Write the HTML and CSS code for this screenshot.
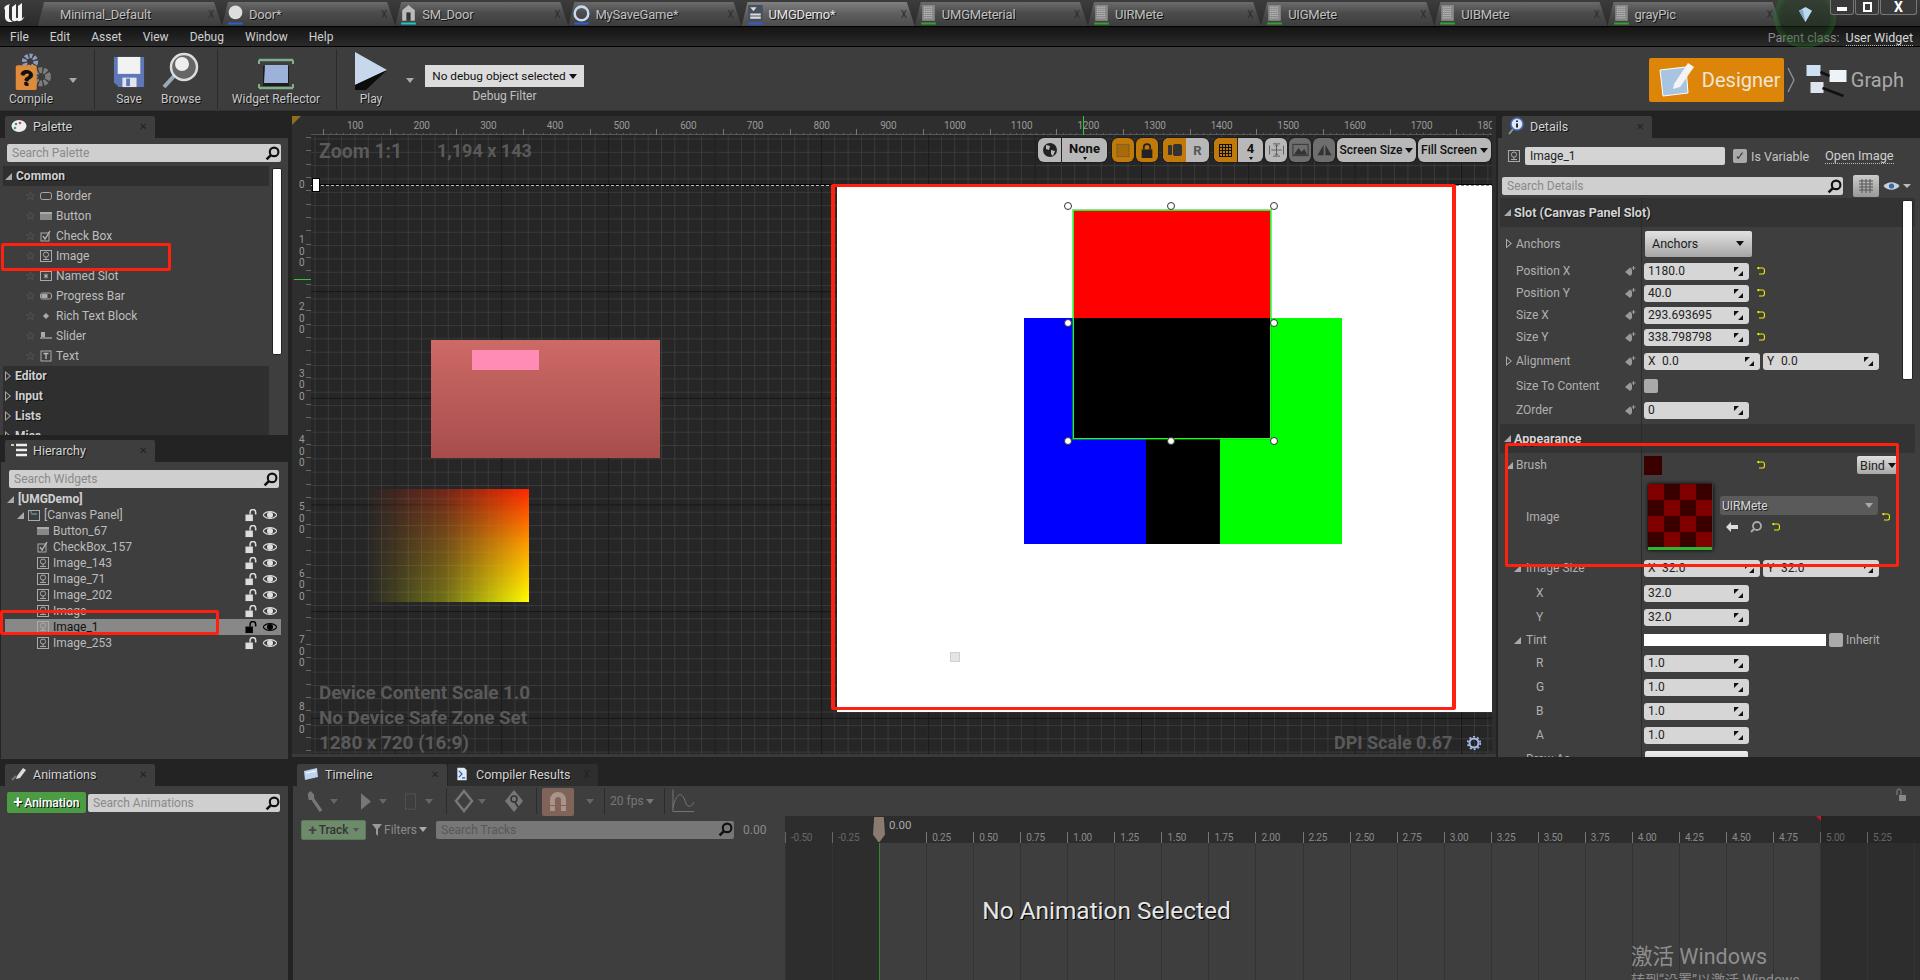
FILE: index.html
```html
<!DOCTYPE html>
<html lang="en">
<head>
    <meta charset="UTF-8">
    <title>UMGDemo</title>
    <link rel="stylesheet" href="styles.css">
</head>
<body>
    <!-- shared icons -->
    <svg class="sprites" width="0" height="0">
        <symbol id="i-search" viewBox="0 0 14 14"><circle cx="8.5" cy="5.5" r="4" fill="none" stroke="#111" stroke-width="2"/><path d="M5.5 8.5L1.5 12.5" stroke="#111" stroke-width="2.4"/></symbol>
        <symbol id="i-lock" viewBox="0 0 13 14"><rect x="0" y="6" width="8" height="7" fill="currentColor"/><path d="M5 6V3.5a3 3 0 0 1 6 0V6" fill="none" stroke="currentColor" stroke-width="1.6"/></symbol>
        <symbol id="i-eye" viewBox="0 0 14 10"><path d="M0 5C3 0.5 11 0.5 14 5C11 9.5 3 9.5 0 5Z" fill="none" stroke="currentColor" stroke-width="1.2"/><circle cx="7" cy="5" r="3" fill="currentColor"/></symbol>
        <symbol id="i-img" viewBox="0 0 12 12"><rect x="0.5" y="0.5" width="11" height="11" fill="none" stroke="#aaa"/><circle cx="6" cy="4.6" r="2.6" fill="none" stroke="#aaa"/><path d="M6 7v2.5M3 9.5h6" stroke="#aaa"/></symbol>
        <symbol id="i-spin" viewBox="0 0 9 9"><path d="M0 0H5L0 5Z M9 9H4L9 4Z" fill="#111"/></symbol>
        <symbol id="i-reset" viewBox="0 0 8 8"><path d="M1 1H6Q7.500 1 7.500 4T6 7H2M2 0L0.500 1L2 2" fill="none" stroke="#ee0" stroke-width="1.1"/></symbol>
        <symbol id="i-pin" viewBox="0 0 11 11"><path d="M0 6L5 1.500L7 3.500V8L5 10Z" fill="#999"/><path d="M8.500 0V4M6.500 2H10.500" stroke="#999"/></symbol>
        <symbol id="i-doc" viewBox="0 0 16 20"><rect x="2" y="1" width="12" height="15" fill="#8a8a8a"/><path d="M4 3h8M4 5h8M4 7h8M4 9h8M4 11h8M4 13h8" stroke="#d0d0d0" stroke-dasharray="1 1"/><path d="M1 18.500H15" stroke="#2fa52f" stroke-width="2"/></symbol>
    </svg>

    <header class="tabbar">
        <svg class="ue-logo" viewBox="0 0 24 20"><path d="M9 1C5 2 2 4 4 7V14C4 18 8 20 12 18.500C9.500 18 8 16 8 14V5C8 3 8 2 9 1Z" fill="#f4f4f4"/><path d="M11 4L15 1V14C15 15.500 16.500 15.500 17 14.500V3L21 0V15.500C22 15 23 14 23.500 13C22.500 17 19 19.500 16 17.500C14 19 12 18 11 17Z" fill="#f4f4f4"/></svg>
        <div class="doc-tab doc-tab-first"><span class="doc-name">Minimal_Default</span><span class="doc-x">X</span></div>
        <div class="doc-tab">
            <svg class="doc-icon" viewBox="0 0 16 20"><circle cx="8" cy="8" r="6.500" fill="#ddd"/><path d="M1 18.500H15" stroke="#2a5fd0" stroke-width="2"/></svg>
            <span class="doc-name">Door*</span><span class="doc-x">X</span>
        </div>
        <div class="doc-tab">
            <svg class="doc-icon" viewBox="0 0 16 20"><path d="M8 1L14 6V16H2V6Z" fill="#bbb"/><rect x="6" y="8" width="4" height="8" fill="#333"/><path d="M1 18.500H15" stroke="#19c8c8" stroke-width="2"/></svg>
            <span class="doc-name">SM_Door</span><span class="doc-x">X</span>
        </div>
        <div class="doc-tab">
            <svg class="doc-icon" viewBox="0 0 16 20"><circle cx="8" cy="9" r="6.500" fill="none" stroke="#c8d8f0" stroke-width="2.400"/><path d="M1 18.500H15" stroke="#2a5fd0" stroke-width="2"/></svg>
            <span class="doc-name">MySaveGame*</span><span class="doc-x">X</span>
        </div>
        <div class="doc-tab doc-tab-on">
            <svg class="doc-icon" viewBox="0 0 16 20"><rect x="1" y="1" width="14" height="15" fill="#46505e"/><path d="M3 3L6 7L9 3" fill="#ddd"/><path d="M3 10H13M3 13H13" stroke="#ddd" stroke-width="2"/><path d="M1 18.500H15" stroke="#2a5fd0" stroke-width="2"/></svg>
            <span class="doc-name">UMGDemo*</span><span class="doc-x">X</span>
        </div>
        <div class="doc-tab"><svg class="doc-icon"><use href="#i-doc"/></svg><span class="doc-name">UMGMeterial</span><span class="doc-x">X</span></div>
        <div class="doc-tab"><svg class="doc-icon"><use href="#i-doc"/></svg><span class="doc-name">UIRMete</span><span class="doc-x">X</span></div>
        <div class="doc-tab"><svg class="doc-icon"><use href="#i-doc"/></svg><span class="doc-name">UIGMete</span><span class="doc-x">X</span></div>
        <div class="doc-tab"><svg class="doc-icon"><use href="#i-doc"/></svg><span class="doc-name">UIBMete</span><span class="doc-x">X</span></div>
        <div class="doc-tab"><svg class="doc-icon"><use href="#i-doc"/></svg><span class="doc-name">grayPic</span><span class="doc-x">X</span></div>
        <div class="glow"></div>
        <svg class="gem" viewBox="0 0 16 18"><path d="M1 5L8 1L15 5L8 17Z" fill="#bcd8ee"/><path d="M5 4L8 17L1 5Z" fill="#7fa8c8"/></svg>
        <div class="win-btns">
            <span class="win-btn win-min"><i></i></span>
            <span class="win-btn win-max"><i></i></span>
            <span class="win-btn win-close">X</span>
        </div>
    </header>

    <nav class="menubar">
        <span>File</span><span>Edit</span><span>Asset</span><span>View</span><span>Debug</span><span>Window</span><span>Help</span>
        <div class="parent-class">Parent class: <a>User Widget</a></div>
    </nav>

    <section class="toolbar">
        <div class="tool tool-compile">
            <svg class="tool-icon" viewBox="0 0 46 42"><circle cx="22" cy="10" r="6" fill="none" stroke="#8e9cc0" stroke-width="5" stroke-dasharray="3 1.500"/><circle cx="34" cy="26" r="7" fill="none" stroke="#7d7d7d" stroke-width="6" stroke-dasharray="3.500 1.500"/><rect x="7" y="14" width="22" height="26" rx="2" fill="#e08a3c"/><text x="18" y="35" class="compile-q">?</text></svg>
            <span>Compile</span>
        </div>
        <i class="drop drop-compile"></i>
        <i class="tool-sep sep-a"></i>
        <div class="tool tool-save">
            <svg class="tool-icon" viewBox="0 0 34 36"><path d="M1 2H33V34H6L1 29Z" fill="#5f77b8"/><rect x="5" y="2" width="24" height="18" fill="#f2f2f2"/><rect x="10" y="24" width="15" height="10" fill="#dfe4ee"/><rect x="14" y="25" width="4" height="8" fill="#5f77b8"/></svg>
            <span>Save</span>
        </div>
        <div class="tool tool-browse">
            <svg class="tool-icon" viewBox="0 0 38 38"><path d="M13 23L2 35" stroke="#9ab" stroke-width="4"/><circle cx="22" cy="15" r="13" fill="#666" stroke="#ddd" stroke-width="2.500"/><circle cx="20" cy="12" r="7" fill="#eee"/></svg>
            <span>Browse</span>
        </div>
        <i class="tool-sep sep-b"></i>
        <div class="tool tool-reflector">
            <svg class="tool-icon" viewBox="0 0 40 34"><path d="M3 3H37M3 31H37" stroke="#7fb08a" stroke-width="2.500"/><path d="M3 3V7M37 3V7M3 31V27M37 31V27" stroke="#7fb08a" stroke-width="2"/><path d="M7 9H33V29H7Z" fill="#1c1c1c"/><path d="M9 8H32V26H8Z" fill="#9db2d8"/></svg>
            <span>Widget Reflector</span>
        </div>
        <i class="tool-sep sep-c"></i>
        <div class="tool tool-play">
            <svg class="tool-icon" viewBox="0 0 34 40"><path d="M1 0L33 18L1 33Z" fill="#c8d8ec"/><path d="M1 33L33 18L12 38L1 38Z" fill="#0c0c0c"/></svg>
            <span>Play</span>
        </div>
        <i class="drop drop-play"></i>
        <div class="debug-col">
            <div class="debug-select">No debug object selected<i class="caret"></i></div>
            <span>Debug Filter</span>
        </div>
        <div class="mode-switch">
            <div class="mode-designer">
                <svg viewBox="0 0 42 40"><path d="M4 10L30 7L32 33L7 36Z" fill="#a8c4e0" stroke="#fff"/><path d="M18 24L32 3L38 7L24 27L17 29Z" fill="#f3f3f3"/></svg>
                <span>Designer</span>
            </div>
            <svg class="mode-chevron" viewBox="0 0 8 26"><path d="M1 1L7 13L1 25" fill="none" stroke="#999" stroke-width="1.200"/></svg>
            <svg class="mode-graph" viewBox="0 0 42 36"><rect x="1" y="3" width="14" height="11" fill="#cfe0f2"/><rect x="24" y="8" width="17" height="12" fill="#eef3f8"/><rect x="5" y="20" width="13" height="11" fill="#dde6ef"/><path d="M15 10L24 14M17 26L38 34" stroke="#111" stroke-width="2.500"/></svg>
            <span class="mode-label">Graph</span>
        </div>
    </section>

    <main class="workspace">
        <div class="left-col">
            <div class="dock dock-palette">
                <div class="dock-tab">
                    <svg class="tab-icon" viewBox="0 0 16 14"><ellipse cx="8" cy="7" rx="7.500" ry="6" fill="#eee"/><circle cx="5" cy="5" r="1.300" fill="#48c"/><circle cx="9" cy="4" r="1.300" fill="#c44"/><circle cx="4" cy="9" r="1.300" fill="#4a4"/></svg>
                    <span>Palette</span><b>&#10005;</b>
                </div>
                <div class="dock-body palette-body">
                    <div class="search search-palette"><span>Search Palette</span><svg><use href="#i-search"/></svg></div>
                    <div class="cat-row"><i class="tri-open"></i>Common</div>
                    <div class="item"><i class="star">&#9734;</i><svg class="item-icon" viewBox="0 0 12 12"><rect x="0.500" y="2.500" width="11" height="7" rx="2" fill="none" stroke="#aaa"/></svg>Border</div>
                    <div class="item"><i class="star">&#9734;</i><svg class="item-icon" viewBox="0 0 12 12"><rect x="0" y="2" width="12" height="8" fill="#888"/><rect x="0" y="2" width="12" height="2" fill="#aaa"/></svg>Button</div>
                    <div class="item"><i class="star">&#9734;</i><svg class="item-icon" viewBox="0 0 12 12"><rect x="1" y="3" width="8" height="8" fill="none" stroke="#aaa"/><path d="M3 6L5 9L10 1" fill="none" stroke="#bbb" stroke-width="1.300"/></svg>Check Box</div>
                    <div class="item"><i class="star">&#9734;</i><svg class="item-icon"><use href="#i-img"/></svg>Image</div>
                    <div class="item"><i class="star">&#9734;</i><svg class="item-icon" viewBox="0 0 12 12"><rect x="0.500" y="1.500" width="11" height="9" fill="none" stroke="#aaa"/><path d="M6 3.500V8.500M3.800 4.500L8.200 7.500M8.200 4.500L3.800 7.500" stroke="#bbb"/></svg>Named Slot</div>
                    <div class="item"><i class="star">&#9734;</i><svg class="item-icon" viewBox="0 0 12 12"><rect x="0.500" y="3" width="11" height="6" rx="2" fill="none" stroke="#aaa"/><rect x="1.500" y="4" width="6" height="4" fill="#aaa"/></svg>Progress Bar</div>
                    <div class="item"><i class="star">&#9734;</i><svg class="item-icon" viewBox="0 0 12 12"><path d="M6 3L9 6L6 9L3 6Z" fill="#aaa"/></svg>Rich Text Block</div>
                    <div class="item"><i class="star">&#9734;</i><svg class="item-icon" viewBox="0 0 12 12"><rect x="1" y="2" width="4" height="5" fill="#aaa"/><path d="M0 8H12" stroke="#aaa" stroke-width="1.300"/></svg>Slider</div>
                    <div class="item"><i class="star">&#9734;</i><svg class="item-icon" viewBox="0 0 12 12"><rect x="1" y="1" width="10" height="10" fill="none" stroke="#aaa"/><path d="M3.500 3.500H8.500M6 3.500V9" stroke="#bbb" stroke-width="1.300"/></svg>Text</div>
                    <div class="cat-row"><i class="tri-closed"></i>Editor</div>
                    <div class="cat-row"><i class="tri-closed"></i>Input</div>
                    <div class="cat-row"><i class="tri-closed"></i>Lists</div>
                    <div class="cat-row"><i class="tri-closed"></i>Misc</div>
                    <div class="palette-thumb"></div>
                    <div class="mark mark-palette"></div>
                </div>
            </div>
            <div class="dock dock-hier">
                <div class="dock-tab">
                    <svg class="tab-icon" viewBox="0 0 16 14"><path d="M5 2H16M5 7H16M5 12H16" stroke="#eee" stroke-width="2.400"/><path d="M0 2H3" stroke="#eee" stroke-width="1.600"/></svg>
                    <span>Hierarchy</span><b>&#10005;</b>
                </div>
                <div class="dock-body hier-body">
                    <div class="search search-hier"><span>Search Widgets</span><svg><use href="#i-search"/></svg></div>
                    <div class="tree">
                        <div class="node node-root"><i class="tri-open"></i>[UMGDemo]</div>
                        <div class="node node-l1"><i class="tri-open"></i><svg class="node-icon" viewBox="0 0 12 12"><rect x="0.500" y="1.500" width="11" height="10" fill="none" stroke="#aaa"/><path d="M3 5H9M3 1V4" stroke="#7ac"/></svg><span>[Canvas Panel]</span><svg class="ico-lock"><use href="#i-lock"/></svg><svg class="ico-eye"><use href="#i-eye"/></svg></div>
                        <div class="node node-l2"><svg class="node-icon" viewBox="0 0 12 12"><rect x="0" y="2" width="12" height="8" fill="#888"/><rect x="0" y="2" width="12" height="2" fill="#aaa"/></svg><span>Button_67</span><svg class="ico-lock"><use href="#i-lock"/></svg><svg class="ico-eye"><use href="#i-eye"/></svg></div>
                        <div class="node node-l2"><svg class="node-icon" viewBox="0 0 12 12"><rect x="1" y="3" width="8" height="8" fill="none" stroke="#aaa"/><path d="M3 6L5 9L10 1" fill="none" stroke="#bbb" stroke-width="1.300"/></svg><span>CheckBox_157</span><svg class="ico-lock"><use href="#i-lock"/></svg><svg class="ico-eye"><use href="#i-eye"/></svg></div>
                        <div class="node node-l2"><svg class="node-icon"><use href="#i-img"/></svg><span>Image_143</span><svg class="ico-lock"><use href="#i-lock"/></svg><svg class="ico-eye"><use href="#i-eye"/></svg></div>
                        <div class="node node-l2"><svg class="node-icon"><use href="#i-img"/></svg><span>Image_71</span><svg class="ico-lock"><use href="#i-lock"/></svg><svg class="ico-eye"><use href="#i-eye"/></svg></div>
                        <div class="node node-l2"><svg class="node-icon"><use href="#i-img"/></svg><span>Image_202</span><svg class="ico-lock"><use href="#i-lock"/></svg><svg class="ico-eye"><use href="#i-eye"/></svg></div>
                        <div class="node node-l2"><svg class="node-icon"><use href="#i-img"/></svg><span>Image</span><svg class="ico-lock"><use href="#i-lock"/></svg><svg class="ico-eye"><use href="#i-eye"/></svg></div>
                        <div class="node node-l2 node-on"><svg class="node-icon"><use href="#i-img"/></svg><span>Image_1</span><svg class="ico-lock"><use href="#i-lock"/></svg><svg class="ico-eye"><use href="#i-eye"/></svg></div>
                        <div class="node node-l2"><svg class="node-icon"><use href="#i-img"/></svg><span>Image_253</span><svg class="ico-lock"><use href="#i-lock"/></svg><svg class="ico-eye"><use href="#i-eye"/></svg></div>
                    </div>
                    <div class="mark mark-hier"></div>
                </div>
            </div>
        </div>

        <div class="designer">
            <i class="corner"></i>
            <div class="ruler-top">
                <span>100</span><span>200</span><span>300</span><span>400</span><span>500</span><span>600</span><span>700</span><span>800</span><span>900</span><span>1000</span><span>1100</span><span>1200</span><span>1300</span><span>1400</span><span>1500</span><span>1600</span><span>1700</span><span>1800</span>
            </div>
            <i class="ruler-mark-top"></i>
            <div class="designer-main">
                <div class="ruler-left">
                    <span>0</span><span>100</span><span>200</span><span>300</span><span>400</span><span>500</span><span>600</span><span>700</span><span>800</span>
                </div>
                <i class="ruler-mark-left"></i>
                <div class="surface">
                    <div class="origin-line"></div>
                    <div class="origin-handle"></div>

                    <div class="w-pink"><div class="w-pink-inner"></div></div>
                    <div class="w-fade"></div>

                    <div class="w-page"></div>
                    <div class="page-dash"></div>
                    <div class="w-blue"></div>
                    <div class="w-black-low"></div>
                    <div class="w-green"></div>
                    <div class="w-red"></div>
                    <div class="w-black"></div>
                    <div class="w-select"></div>
                    <i class="hd hd-1"></i><i class="hd hd-2"></i><i class="hd hd-3"></i>
                    <i class="hd hd-4"></i><i class="hd hd-5"></i>
                    <i class="hd hd-6"></i><i class="hd hd-7"></i><i class="hd hd-8"></i>
                    <div class="w-check"></div>
                    <div class="mark mark-canvas"></div>

                    <div class="info info-zoom">Zoom 1:1</div>
                    <div class="info info-size">1,194 x 143</div>
                    <div class="info info-device">
                        <div>Device Content Scale 1.0</div>
                        <div>No Device Safe Zone Set</div>
                        <div>1280 x 720 (16:9)</div>
                    </div>
                    <div class="info info-dpi">DPI Scale 0.67</div>
                    <svg class="dpi-gear" viewBox="0 0 14 18"><circle cx="7" cy="9" r="4.500" fill="none" stroke="#a8bce8" stroke-width="2"/><circle cx="7" cy="9" r="6.300" fill="none" stroke="#a8bce8" stroke-width="1.600" stroke-dasharray="2 2"/></svg>

                    <div class="canvas-tools">
                        <div class="ct-group ct-world">
                            <span class="ct-cell ct-globe"><svg viewBox="0 0 16 16"><circle cx="8" cy="8" r="7" fill="#222"/><path d="M4 3L8 4L7 8L4 7ZM9 8L13 9L11 14L9 12Z" fill="#bbb"/></svg></span>
                            <span class="ct-cell ct-none">None<i class="caret-sm"></i></span>
                        </div>
                        <div class="ct-group ct-orange ct-one"><svg viewBox="0 0 16 16"><rect x="1" y="1" width="14" height="14" fill="#a96a08" stroke="#555" stroke-dasharray="2 1"/></svg></div>
                        <div class="ct-group ct-orange ct-one"><svg viewBox="0 0 12 14"><rect x="1" y="6" width="10" height="8" fill="#222"/><path d="M3 6V4a3 3 0 0 1 6 0V6" fill="none" stroke="#222" stroke-width="1.600"/></svg></div>
                        <div class="ct-group ct-rr">
                            <span class="ct-cell ct-rr-a"><svg viewBox="0 0 14 14"><rect x="0" y="2" width="4" height="10" rx="1" fill="#333"/><rect x="5" y="1" width="9" height="12" rx="2" fill="#333"/></svg></span>
                            <span class="ct-cell ct-rr-b">R</span>
                        </div>
                        <div class="ct-group ct-grid">
                            <span class="ct-cell ct-grid-a"><svg viewBox="0 0 13 13"><path d="M0 .500H13M0 3.500H13M0 6.500H13M0 9.500H13M0 12.500H13M.500 0V13M3.500 0V13M6.500 0V13M9.500 0V13M12.500 0V13" stroke="#111"/></svg></span>
                            <span class="ct-cell ct-grid-b">4<i class="caret-sm"></i></span>
                        </div>
                        <div class="ct-btn ct-fit"><svg viewBox="0 0 18 16"><path d="M9 2V14M3 8H15M1 3V13M17 3V13M5 1H13M5 15H13M7 4L9 2L11 4M7 12L9 14L11 12" fill="none" stroke="#555"/></svg></div>
                        <div class="ct-btn ct-dim"><svg viewBox="0 0 18 14"><rect x="1" y="1" width="16" height="12" fill="none" stroke="#333"/><path d="M2 12L7 5L10 9L13 6L16 12Z" fill="#333"/></svg></div>
                        <div class="ct-btn ct-dim"><svg viewBox="0 0 18 16"><path d="M8 2L1 14H8ZM10 2V14H17Z" fill="#333"/></svg></div>
                        <div class="ct-btn ct-screen">Screen Size<i class="caret"></i></div>
                        <div class="ct-btn ct-fill">Fill Screen<i class="caret"></i></div>
                    </div>
                </div>
            </div>
        </div>

        <aside class="details">
            <div class="dock-tab">
                <svg class="tab-icon tab-icon-info" viewBox="0 0 16 18"><path d="M5 12L1 17" stroke="#89a" stroke-width="2"/><circle cx="9" cy="7" r="6" fill="#dfe8f5" stroke="#4a70c0" stroke-width="1.500"/><path d="M9 3.500V5M9 6.500V10.500" stroke="#223" stroke-width="2"/></svg>
                <span>Details</span><b>&#10005;</b>
            </div>
            <div class="dock-body details-body">
                <div class="name-line">
                    <svg class="name-icon"><use href="#i-img"/></svg>
                    <div class="name-input">Image_1</div>
                    <span class="check check-on">&#10003;</span>
                    <span class="is-var">Is Variable</span>
                    <a class="open-image">Open Image</a>
                </div>
                <div class="search-line">
                    <div class="search search-details"><span>Search Details</span><svg><use href="#i-search"/></svg></div>
                    <div class="matrix-btn"><svg viewBox="0 0 14 14"><path d="M0 2H14M0 5H14M0 8H14M0 11H14M3 0V14M7 0V14M11 0V14" stroke="#555"/></svg></div>
                    <svg class="view-eye" viewBox="0 0 16 10"><path d="M0 5C4 0 12 0 16 5C12 10 4 10 0 5Z" fill="#c8d0dc"/><circle cx="8" cy="5" r="2.600" fill="#3a68a8"/></svg>
                    <i class="view-caret"></i>
                </div>

                <div class="prop-list">
                    <div class="sect sect-slot"><i class="tri-open"></i>Slot (Canvas Panel Slot)</div>
                    <div class="row row-anchors"><i class="tri-closed tri-row"></i><span class="name">Anchors</span><span class="pin-gap"></span><div class="anchors-btn">Anchors<i class="caret"></i></div></div>
                    <div class="row"><span class="name">Position X</span><svg class="pin"><use href="#i-pin"/></svg><div class="num">1180.0<svg><use href="#i-spin"/></svg></div><svg class="reset"><use href="#i-reset"/></svg></div>
                    <div class="row"><span class="name">Position Y</span><svg class="pin"><use href="#i-pin"/></svg><div class="num">40.0<svg><use href="#i-spin"/></svg></div><svg class="reset"><use href="#i-reset"/></svg></div>
                    <div class="row"><span class="name">Size X</span><svg class="pin"><use href="#i-pin"/></svg><div class="num">293.693695<svg><use href="#i-spin"/></svg></div><svg class="reset"><use href="#i-reset"/></svg></div>
                    <div class="row"><span class="name">Size Y</span><svg class="pin"><use href="#i-pin"/></svg><div class="num">338.798798<svg><use href="#i-spin"/></svg></div><svg class="reset"><use href="#i-reset"/></svg></div>
                    <div class="row row-24 row-gap"><i class="tri-closed tri-row"></i><span class="name">Alignment</span><svg class="pin"><use href="#i-pin"/></svg><div class="num num-wide"><em>X</em>0.0<svg><use href="#i-spin"/></svg></div><div class="num num-wide num-next"><em>Y</em>0.0<svg><use href="#i-spin"/></svg></div></div>
                    <div class="row row-24 row-gap"><span class="name">Size To Content</span><svg class="pin"><use href="#i-pin"/></svg><span class="check"></span></div>
                    <div class="row row-24"><span class="name">ZOrder</span><svg class="pin"><use href="#i-pin"/></svg><div class="num">0<svg><use href="#i-spin"/></svg></div></div>

                    <div class="sect sect-app"><i class="tri-open"></i>Appearance</div>
                    <div class="row row-24 row-brush"><i class="tri-open tri-row"></i><span class="name">Brush</span><span class="pin-gap"></span><span class="swatch"></span><svg class="reset reset-brush"><use href="#i-reset"/></svg><div class="bind-btn">Bind<i class="caret"></i></div></div>
                    <div class="row row-image">
                        <span class="name name-l1">Image</span><span class="pin-gap"></span>
                        <div class="thumb">
                            <i></i><i></i><i></i><i></i><i></i><i></i><i></i><i></i>
                            <i></i><i></i><i></i><i></i><i></i><i></i><i></i><i></i>
                            <b></b>
                        </div>
                        <div class="asset-col">
                            <div class="asset-select">UIRMete<i class="caret-grey"></i></div>
                            <div class="asset-tools">
                                <svg viewBox="0 0 12 11"><path d="M0 5.500L5 0.500V3.500H12V7.500H5V10.500Z" fill="#ddd"/></svg>
                                <svg viewBox="0 0 12 12"><circle cx="7" cy="5" r="4" fill="none" stroke="#aaa" stroke-width="1.800"/><path d="M4 8L1 11" stroke="#aaa" stroke-width="2"/></svg>
                                <svg class="reset"><use href="#i-reset"/></svg>
                            </div>
                        </div>
                        <svg class="reset reset-asset"><use href="#i-reset"/></svg>
                    </div>
                    <div class="row row-24"><i class="tri-open tri-row-l1"></i><span class="name name-l1">Image Size</span><span class="pin-gap"></span><div class="num num-wide"><em>X</em>32.0<svg><use href="#i-spin"/></svg></div><div class="num num-wide num-next"><em>Y</em>32.0<svg><use href="#i-spin"/></svg></div></div>
                    <div class="row row-24 row-gap"><span class="name name-l2">X</span><span class="pin-gap"></span><div class="num">32.0<svg><use href="#i-spin"/></svg></div></div>
                    <div class="row row-24"><span class="name name-l2">Y</span><span class="pin-gap"></span><div class="num">32.0<svg><use href="#i-spin"/></svg></div></div>
                    <div class="row row-tint"><i class="tri-open tri-row-l1"></i><span class="name name-l1">Tint</span><span class="pin-gap"></span><span class="tint-bar"></span><span class="check check-tint"></span><span class="inherit">Inherit</span></div>
                    <div class="row row-24"><span class="name name-l2">R</span><span class="pin-gap"></span><div class="num">1.0<svg><use href="#i-spin"/></svg></div></div>
                    <div class="row row-24"><span class="name name-l2">G</span><span class="pin-gap"></span><div class="num">1.0<svg><use href="#i-spin"/></svg></div></div>
                    <div class="row row-24"><span class="name name-l2">B</span><span class="pin-gap"></span><div class="num">1.0<svg><use href="#i-spin"/></svg></div></div>
                    <div class="row row-24"><span class="name name-l2">A</span><span class="pin-gap"></span><div class="num">1.0<svg><use href="#i-spin"/></svg></div></div>
                    <div class="row row-24 row-last"><span class="name name-l1">Draw As</span><span class="pin-gap"></span><div class="draw-as"></div></div>
                </div>
                <div class="details-thumb"></div>
                <div class="mark mark-details"></div>
            </div>
        </aside>
    </main>

    <section class="bottom">
        <div class="anim-col">
            <div class="dock-tab">
                <svg class="tab-icon" viewBox="0 0 16 14"><path d="M6 9L12 1L15 3L9 11L5 12Z" fill="#ddd"/><path d="M1 13L5 9" stroke="#777" stroke-width="2"/></svg>
                <span>Animations</span><b>&#10005;</b>
            </div>
            <div class="dock-body anim-body">
                <div class="add-anim"><strong>+</strong>Animation</div>
                <div class="search search-anim"><span>Search Animations</span><svg><use href="#i-search"/></svg></div>
            </div>
        </div>
        <div class="time-col">
            <div class="tab-row">
                <div class="dock-tab">
                    <svg class="tab-icon" viewBox="0 0 16 14"><path d="M1 4L14 1L15 10L2 13Z" fill="#bcd4f0"/><path d="M3 6L13 4" stroke="#fff"/></svg>
                    <span>Timeline</span><b>&#10005;</b>
                </div>
                <div class="dock-tab dock-tab-off">
                    <svg class="tab-icon" viewBox="0 0 14 18"><path d="M1 1H10L13 4V17H1Z" fill="#dfe8f5"/><path d="M3 5L7 9L3 13M7 14H11" fill="none" stroke="#2a5fb0" stroke-width="1.600"/></svg>
                    <span>Compiler Results</span><b>X</b>
                </div>
            </div>
            <div class="time-body">
                <div class="time-tools">
                    <svg class="tt-wrench" viewBox="0 0 18 24"><path d="M3 1L7 5V9L16 22L13 24L4 11H1L0 4Z" fill="#777"/></svg>
                    <i class="tt-drop tt-d1"></i>
                    <svg class="tt-play" viewBox="0 0 12 20"><path d="M0 0L12 10L0 20Z" fill="#777"/></svg>
                    <i class="tt-drop tt-d2"></i>
                    <svg class="tt-dots" viewBox="0 0 14 20"><rect x="1" y="1" width="12" height="18" fill="none" stroke="#777" stroke-dasharray="1 1.500"/></svg>
                    <i class="tt-drop tt-d3"></i>
                    <i class="tt-sep tt-s1"></i>
                    <svg class="tt-diamond" viewBox="0 0 20 24"><path d="M10 2L18 12L10 22L2 12Z" fill="none" stroke="#777" stroke-width="2.500"/></svg>
                    <i class="tt-drop tt-d4"></i>
                    <svg class="tt-diamond2" viewBox="0 0 20 24"><path d="M10 1L19 12L10 23L1 12Z" fill="#777"/><circle cx="10" cy="10" r="3" fill="none" stroke="#333" stroke-width="1.500"/><path d="M11 13L14 18" stroke="#333" stroke-width="1.500"/></svg>
                    <i class="tt-sep tt-s2"></i>
                    <div class="tt-magnet"><svg viewBox="0 0 20 22"><path d="M2 14V9a8 8 0 0 1 16 0V14H13V9a3 3 0 0 0-6 0V14Z" fill="#a89488"/><path d="M2 15H7V20H2ZM13 15H18V20H13Z" fill="#a89488"/></svg></div>
                    <i class="tt-drop tt-d5"></i>
                    <i class="tt-sep tt-s3"></i>
                    <span class="tt-fps">20 fps</span>
                    <i class="tt-drop tt-d6"></i>
                    <i class="tt-sep tt-s4"></i>
                    <svg class="tt-curve" viewBox="0 0 24 26"><path d="M1 1V24H23M1 20C5 2 11 4 14 14C16 20 20 20 23 14" fill="none" stroke="#777"/></svg>
                    <svg class="tt-lock" viewBox="0 0 10 14"><path d="M1 7V3a2 2 0 0 1 4 0V7" fill="none" stroke="#888"/><rect x="3" y="7" width="7" height="6" fill="#888"/></svg>
                </div>
                <div class="time-main">
                    <div class="track-side">
                        <div class="track-row">
                            <div class="add-track"><strong>+</strong>Track<i class="caret-dim"></i></div>
                            <div class="filters"><svg viewBox="0 0 10 12"><path d="M0 0H10L6 5V12L4 10V5Z" fill="#999"/></svg>Filters<i class="caret-grey"></i></div>
                            <div class="search search-track"><span>Search Tracks</span><svg><use href="#i-search"/></svg></div>
                            <span class="track-time">0.00</span>
                        </div>
                    </div>
                    <div class="time-side">
                        <div class="time-ruler">
                            <span class="dim">-0.50</span><span class="dim">-0.25</span><span class="no-tick"></span><span>0.25</span><span>0.50</span><span>0.75</span><span>1.00</span><span>1.25</span><span>1.50</span><span>1.75</span><span>2.00</span><span>2.25</span><span>2.50</span><span>2.75</span><span>3.00</span><span>3.25</span><span>3.50</span><span>3.75</span><span>4.00</span><span>4.25</span><span>4.50</span><span>4.75</span><span class="dim">5.00</span><span class="dim">5.25</span>
                            <div class="head-time">0.00</div>
                            <i class="playhead"></i>
                            <i class="end-mark"></i>
                        </div>
                        <div class="time-tracks"></div>
                    </div>
                </div>
                <div class="no-anim">No Animation Selected</div>
            </div>
        </div>
    </section>

    <div class="watermark">
        <div class="wm-big">激活 Windows</div>
        <div class="wm-small">转到“设置”以激活 Windows。</div>
    </div>
</body>
</html>
```

FILE: styles.css
```css
/* General */
* {
    box-sizing: border-box;
}

html, body {
    margin: 0;
    height: 980px;
    overflow: hidden;
}

body {
    position: relative;
    width: 1920px;
    background-color: #232323;
    color: #c4c4c4;
    font-family: 'Roboto', 'Liberation Sans', sans-serif;
    font-size: 12px;
}

i, em {
    font-style: normal;
}

svg {
    display: block;
    flex: none;
}

.sprites {
    position: absolute;
}

/* Small triangles used all over */
.caret {
    display: inline-block;
    width: 0;
    height: 0;
    margin-left: 3px;
    border-left: 4.5px solid transparent;
    border-right: 4.5px solid transparent;
    border-top: 5px solid #111;
}

.caret-sm {
    position: absolute;
    left: 50%;
    bottom: 2px;
    margin-left: -2px;
    border-left: 2.5px solid transparent;
    border-right: 2.5px solid transparent;
    border-top: 3px solid #111;
}

.caret-grey {
    display: inline-block;
    width: 0;
    height: 0;
    border-left: 4.5px solid transparent;
    border-right: 4.5px solid transparent;
    border-top: 5px solid #aaa;
}

.caret-dim {
    display: inline-block;
    width: 0;
    height: 0;
    margin-left: 4px;
    border-left: 3.5px solid transparent;
    border-right: 3.5px solid transparent;
    border-top: 4px solid #555;
}

.tri-open {
    display: block;
    width: 0;
    height: 0;
    flex: none;
    border-left: 7px solid transparent;
    border-bottom: 7px solid #aaa;
}

.tri-closed {
    display: block;
    width: 6px;
    height: 10px;
    flex: none;
    background: #aaa;
    clip-path: polygon(0 0, 100% 50%, 0 100%, 0 0, 1px 2px, 1px 8px, 4.5px 5px, 1px 2px);
}

/* Document tabs */
.tabbar {
    position: relative;
    display: flex;
    align-items: flex-end;
    height: 27px;
    background: linear-gradient(#3c3c3c, #2a2a2a);
    border-bottom: 1px solid #000;
}

.ue-logo {
    align-self: center;
    width: 24px;
    height: 20px;
    margin: 0 13px 0 1px;
}

.doc-tab {
    display: flex;
    align-items: center;
    flex: none;
    width: 173.2px;
    height: 24px;
    padding: 0 8px 0 5px;
    background: linear-gradient(#6b6b6b, #4c4c4c 45%, #3d3d3d);
    clip-path: polygon(6px 0, calc(100% - 8px) 0, 100% 100%, 0 100%);
    color: #c0c0c0;
    font-size: 13px;
    letter-spacing: -0.2px;
    text-shadow: 1px 1px 0 #111;
}

.doc-tab-first {
    width: 184px;
    padding-left: 22px;
}

.doc-tab-on {
    background: linear-gradient(#808080, #5e5e5e 50%, #4c4c4c);
    color: #e6e6e6;
}

.doc-icon {
    width: 17px;
    height: 21px;
    margin-right: 5px;
}

.doc-name {
    flex: 1;
    white-space: nowrap;
}

.doc-x {
    color: #2d2d2d;
    font-size: 10px;
    text-shadow: none;
}

.glow {
    position: absolute;
    left: 1774px;
    top: -14px;
    width: 62px;
    height: 62px;
    border-radius: 50%;
    background: radial-gradient(circle, rgba(30, 70, 30, 0.3) 55%, rgba(40, 150, 40, 0.55) 85%, transparent 100%);
    z-index: 3;
    pointer-events: none;
}

.gem {
    position: absolute;
    left: 1798px;
    top: 6px;
    width: 15px;
    height: 17px;
    z-index: 4;
}

.win-btns {
    position: absolute;
    right: 3px;
    top: 0;
    display: flex;
    gap: 1px;
    z-index: 4;
}

.win-btn {
    display: flex;
    align-items: center;
    justify-content: center;
    width: 24px;
    height: 15px;
    background: #3a3a3a;
    border: 1px solid #777;
    border-top: none;
    border-radius: 0 0 3px 3px;
    color: #fff;
    font-weight: 700;
    font-size: 14px;
}

.win-close {
    width: 37px;
}

.win-min i {
    width: 10px;
    height: 4px;
    margin-top: 3px;
    background: #fff;
}

.win-max i {
    width: 9px;
    height: 10px;
    border: 2px solid #fff;
}

/* Menu */
.menubar {
    position: relative;
    display: flex;
    align-items: center;
    gap: 21px;
    height: 20px;
    padding-left: 10px;
    background: linear-gradient(#141414, #2a2a2a);
    border-bottom: 1px solid #000;
    color: #cfcfcf;
}

.parent-class {
    position: absolute;
    right: 7px;
    top: 3px;
    color: #888;
    font-size: 12.5px;
}

.parent-class a {
    margin-left: 3px;
    color: #d8d8d8;
    border-bottom: 1px dotted #bbb;
}

/* Main toolbar */
.toolbar {
    display: flex;
    align-items: flex-start;
    height: 64px;
    background-color: #3d3d3d;
    border-bottom: 1px solid #333;
}

.tool {
    display: flex;
    flex-direction: column;
    align-items: center;
    height: 63px;
    padding-top: 5px;
    color: #c8c8c8;
    text-shadow: 1px 1px 0 #111;
}

.tool span {
    margin-top: auto;
    margin-bottom: 4px;
    white-space: nowrap;
}

.tool-compile { width: 62px; }
.tool-compile .tool-icon { width: 44px; height: 40px; }
.compile-q { font: 700 24px 'Liberation Sans', sans-serif; fill: #111; text-anchor: middle; }
.tool-save { width: 50px; margin-left: 9px; }
.tool-save .tool-icon { width: 32px; height: 34px; margin-top: 3px; }
.tool-browse { width: 54px; }
.tool-browse .tool-icon { width: 38px; height: 38px; }
.tool-reflector { width: 100px; margin-left: 8px; }
.tool-reflector .tool-icon { width: 40px; height: 34px; margin-top: 5px; }
.tool-play { width: 52px; margin-left: 8px; }
.tool-play .tool-icon { width: 34px; height: 40px; }

.tool-sep {
    width: 1px;
    height: 60px;
    margin-top: 2px;
    background: #2a2a2a;
}

.sep-a { margin-left: 8px; }
.sep-b { margin-left: 9px; }
.sep-c { margin-left: 10px; }

.drop {
    width: 0;
    height: 0;
    margin-top: 31px;
    border-left: 4px solid transparent;
    border-right: 4px solid transparent;
    border-top: 5px solid #aaa;
}

.drop-compile { margin-left: 7px; margin-right: 9px; }
.drop-play { margin-left: 9px; margin-right: 7px; }

.debug-col {
    display: flex;
    flex-direction: column;
    align-items: center;
    width: 159px;
    margin-left: 4px;
    padding-top: 18px;
    color: #c0c0c0;
}

.debug-select {
    display: flex;
    align-items: center;
    justify-content: center;
    width: 159px;
    height: 22px;
    margin-bottom: 2px;
    background: #dcdcdc;
    color: #111;
    font-size: 11.8px;
}

.mode-switch {
    display: flex;
    align-items: center;
    height: 44px;
    margin: 11px 16px 0 auto;
}

.mode-designer {
    display: flex;
    align-items: center;
    width: 135px;
    height: 44px;
    padding-left: 7px;
    background: #dd8509;
    border-radius: 2px;
    color: #f0e6d8;
    font-size: 20px;
}

.mode-designer svg {
    width: 42px;
    height: 40px;
    margin-right: 4px;
}

.mode-chevron {
    width: 8px;
    height: 26px;
    margin: 0 10px 0 3px;
}

.mode-graph {
    width: 43px;
    height: 36px;
    margin-right: 3px;
}

.mode-label {
    color: #aaa;
    font-size: 20px;
}

/* Docked panels */
.workspace {
    display: flex;
    height: 649px;
    padding-top: 5px;
}

.left-col {
    display: flex;
    flex-direction: column;
    gap: 5px;
    width: 288px;
}

.dock-palette { height: 319px; }
.dock-hier { height: 319px; }

.dock {
    display: flex;
    flex-direction: column;
}

.dock-tab {
    display: flex;
    align-items: center;
    flex: none;
    width: 150px;
    height: 22px;
    margin-left: 5px;
    padding: 0 0 2px 6px;
    background: #3e3e3e;
    border-radius: 2px 2px 0 0;
    color: #d4d4d4;
    font-size: 12.5px;
    text-shadow: 1px 1px 0 #111;
}

.dock-tab span {
    flex: 1;
}

.dock-tab b {
    margin-right: 8px;
    color: #222;
    font-weight: 400;
    font-size: 10px;
    text-shadow: none;
}

.dock-tab-off {
    background: #2e2e2e;
    margin-left: 1px;
}

.tab-icon {
    width: 16px;
    height: 14px;
    margin-right: 6px;
}

.tab-icon-info {
    height: 18px;
}

.dock-body {
    position: relative;
    flex: 1;
    background: #3e3e3e;
}

.search {
    display: flex;
    align-items: center;
    justify-content: space-between;
    height: 18px;
    padding: 0 1px 0 5px;
    background: #cfcfcf;
    border-radius: 2px;
    color: #8a8a8a;
    font-size: 12px;
}

.search svg {
    width: 15px;
    height: 15px;
}

.mark {
    position: absolute;
    border: 3px solid #ff2010;
    border-radius: 2px;
    z-index: 5;
    pointer-events: none;
}

/* Palette */
.palette-body {
    overflow: hidden;
    padding: 6px 6px 0 3px;
}

.search-palette {
    margin: 0 0 4px 4px;
    width: 274px;
}

.cat-row {
    display: flex;
    align-items: center;
    width: 266px;
    height: 20px;
    padding-left: 2px;
    background: #2f2f2f;
    color: #d0d0d0;
    font-weight: 700;
    text-shadow: 1px 1px 0 #111;
}

.cat-row i {
    margin-right: 4px;
}

.item {
    display: flex;
    align-items: center;
    height: 20px;
    padding-left: 22px;
    color: #bdbdbd;
}

.star {
    width: 14px;
    color: #666;
    font-size: 12px;
}

.item-icon {
    width: 12px;
    height: 12px;
    margin: 0 4px 0 1px;
}

.palette-thumb {
    position: absolute;
    left: 272px;
    top: 30px;
    width: 10px;
    height: 187px;
    background: #fff;
    border: 1px solid #222;
    border-radius: 2px;
}

.mark-palette {
    left: 1px;
    top: 105px;
    width: 170px;
    height: 28px;
}

/* Hierarchy */
.dock-hier .dock-body {
    margin-left: 1px;
    padding: 8px 7px 0 4px;
}

.search-hier {
    width: 270px;
    margin-left: 4px;
    margin-bottom: 3px;
}

.node {
    display: flex;
    align-items: center;
    height: 16px;
    color: #bcbcbc;
    font-size: 12px;
}

.node span {
    flex: 1;
}

.node-root {
    padding-left: 2px;
    color: #d0d0d0;
    font-weight: 700;
}

.node-root i {
    margin-right: 4px;
}

.node-l1 {
    padding-left: 12px;
}

.node-l1 i {
    margin-right: 4px;
}

.node-icon {
    width: 12px;
    height: 12px;
    margin-right: 4px;
}

.node-l2 {
    padding-left: 32px;
}

.ico-lock {
    width: 13px;
    height: 13px;
    color: #ddd;
    margin-right: 5px;
}

.ico-eye {
    width: 14px;
    height: 10px;
    color: #ddd;
    margin-right: 4px;
}

.node-on {
    background: #888;
    color: #111;
}

.node-on .ico-lock,
.node-on .ico-eye {
    color: #000;
}

.mark-hier {
    left: -1px;
    top: 148px;
    width: 219px;
    height: 25px;
}

/* Designer */
.designer {
    position: relative;
    display: flex;
    flex-direction: column;
    width: 1204px;
    height: 641px;
    margin-left: 4px;
    background: #2e2e2e;
    overflow: hidden;
    border-bottom: 3px solid #3a3a3a;
}

.corner {
    position: absolute;
    left: 0;
    top: 0;
    border-top: 9px solid #8e6f1c;
    border-right: 9px solid transparent;
}

.ruler-top {
    display: flex;
    flex: none;
    height: 19px;
    margin: 0 4px 0 19px;
    padding-left: 10.7px;
    overflow: hidden;
    color: #999;
    font-size: 10px;
    letter-spacing: -0.2px;
    background:
        repeating-linear-gradient(90deg, #777 0 1px, transparent 1px 66.67px) 11.5px 100% / 100% 6px no-repeat,
        repeating-linear-gradient(90deg, #5e5e5e 0 1px, transparent 1px 6.667px) 11.5px 100% / 100% 2px no-repeat,
        linear-gradient(#555, #555) 0 100% / 100% 1px no-repeat;
}

.ruler-top span {
    flex: none;
    width: 66.67px;
    padding-top: 4px;
    text-align: center;
}

.ruler-mark-top {
    position: absolute;
    left: 791px;
    top: 0;
    width: 1px;
    height: 19px;
    background: #2dcc2d;
}

.ruler-mark-left {
    position: absolute;
    left: 2px;
    top: 163px;
    width: 17px;
    height: 1px;
    background: #2dcc2d;
}

.designer-main {
    display: flex;
    flex: 1;
    min-height: 0;
}

.ruler-left {
    flex: none;
    width: 19px;
    padding-top: 16.7px;
    color: #999;
    font-size: 10px;
    background:
        repeating-linear-gradient(180deg, #666 0 1px, transparent 1px 13.33px) 100% 2px / 5px 100% no-repeat;
}

.ruler-left span {
    display: flex;
    align-items: center;
    height: 66.67px;
    width: 14px;
    padding-left: 7px;
    line-height: 11.5px;
    word-break: break-all;
}

.surface {
    position: relative;
    flex: 1;
    margin-right: 4px;
    overflow: hidden;
    background-color: #262626;
    background-image:
        linear-gradient(90deg, #161616 1px, transparent 1px),
        linear-gradient(#161616 1px, transparent 1px),
        linear-gradient(90deg, #3a3a3a 1px, transparent 1px),
        linear-gradient(#3a3a3a 1px, transparent 1px);
    background-size: 106.67px 106.67px, 106.67px 106.67px, 13.33px 13.33px, 13.33px 13.33px;
    background-position: 83.5px 49.5px, 83.5px 49.5px, 3.5px 3.5px, 3.5px 3.5px;
}

.origin-line {
    position: absolute;
    left: 0;
    right: 0;
    top: 49px;
    height: 3px;
    border-top: 1px solid #000;
    background: repeating-linear-gradient(90deg, #bbb 0 3px, transparent 3px 5px) 0 0 / 100% 1px no-repeat;
}

.origin-handle {
    position: absolute;
    left: 1px;
    top: 43px;
    width: 8px;
    height: 14px;
    background: #fff;
    border: 1px solid #000;
}

/* Widgets on the canvas, placed by their design position */
.w-pink {
    position: absolute;
    left: 120px;
    top: 205px;
    width: 229px;
    height: 118px;
    background: linear-gradient(#cc6a66, #a84c4c);
}

.w-pink-inner {
    position: absolute;
    left: 41px;
    top: 10px;
    width: 67px;
    height: 20px;
    background: #ff8cb4;
}

.w-fade {
    position: absolute;
    left: 50px;
    top: 354px;
    width: 168px;
    height: 113px;
    background: linear-gradient(#ff2800, #ffa000 50%, #ffff00);
    -webkit-mask-image: linear-gradient(90deg, transparent 3%, rgba(0, 0, 0, 0.35) 50%, #000 100%);
    mask-image: linear-gradient(90deg, transparent 3%, rgba(0, 0, 0, 0.35) 50%, #000 100%);
}

.w-page {
    position: absolute;
    left: 526px;
    top: 50px;
    width: 655px;
    height: 527px;
    background: #fff;
}

.page-dash {
    position: absolute;
    left: 1145px;
    right: 0;
    top: 50px;
    height: 1px;
    background: repeating-linear-gradient(90deg, #888 0 3px, transparent 3px 5px);
}

.w-blue {
    position: absolute;
    left: 713px;
    top: 183px;
    width: 122px;
    height: 226px;
    background: #00f;
}

.w-black-low {
    position: absolute;
    left: 835px;
    top: 303px;
    width: 74px;
    height: 106px;
    background: #000;
}

.w-green {
    position: absolute;
    left: 909px;
    top: 183px;
    width: 122px;
    height: 226px;
    background: #0f0;
}

.w-red {
    position: absolute;
    left: 763px;
    top: 76px;
    width: 196px;
    height: 107px;
    background: #f00;
}

.w-black {
    position: absolute;
    left: 763px;
    top: 183px;
    width: 196px;
    height: 120px;
    background: #000;
}

.w-select {
    position: absolute;
    left: 762px;
    top: 75px;
    width: 198px;
    height: 229px;
    border: 1px solid #1bff1b;
    outline: 1px solid rgba(27, 200, 27, 0.5);
}

.hd {
    position: absolute;
    width: 8px;
    height: 8px;
    background: #fff;
    border: 1px solid #333;
    border-radius: 50%;
    margin: -4px 0 0 -4px;
}

.hd-1 { left: 757px; top: 71px; }
.hd-2 { left: 860px; top: 71px; }
.hd-3 { left: 963px; top: 71px; }
.hd-4 { left: 757px; top: 188px; }
.hd-5 { left: 963px; top: 188px; }
.hd-6 { left: 757px; top: 306px; background: #fff; }
.hd-7 { left: 860px; top: 306px; }
.hd-8 { left: 963px; top: 306px; }

.w-check {
    position: absolute;
    left: 639px;
    top: 517px;
    width: 10px;
    height: 10px;
    background: #e4e4e4;
    border: 1px solid #d0d0d0;
}

.mark-canvas {
    left: 520px;
    top: 49px;
    width: 625px;
    height: 526px;
    border-width: 3px 4px;
}

.info {
    position: absolute;
    color: #5a5a5a;
    font-weight: 700;
    font-size: 19px;
    white-space: nowrap;
}

.info-zoom { left: 8px; top: 5px; font-size: 19.5px; }
.info-size { left: 126px; top: 5px; font-size: 18px; }

.info-device {
    left: 8px;
    top: 545px;
    font-size: 19px;
    line-height: 25px;
    letter-spacing: -0.1px;
}

.info-dpi { left: 1023px; top: 597px; font-size: 18px; }

.dpi-gear {
    position: absolute;
    left: 1156px;
    top: 599px;
    width: 14px;
    height: 18px;
}

.canvas-tools {
    position: absolute;
    left: 727px;
    top: 3px;
    display: flex;
    gap: 2px;
    color: #111;
    font-weight: 700;
}

.ct-group, .ct-btn {
    display: flex;
    align-items: center;
    height: 24px;
    border-radius: 6px;
    background: #b8b8b8;
    overflow: hidden;
    box-shadow: 0 0 0 1px #1e1e1e;
}

.ct-cell {
    position: relative;
    display: flex;
    align-items: center;
    justify-content: center;
    height: 100%;
}

.ct-world { width: 69px; margin-right: 3px; }
.ct-globe { width: 24px; border-right: 1px solid #222; }
.ct-globe svg { width: 16px; height: 16px; }
.ct-none { flex: 1; font-size: 13px; padding-bottom: 3px; }

.ct-orange {
    justify-content: center;
    background: #c17908;
}

.ct-one { width: 22px; }
.ct-one svg { width: 14px; height: 15px; }

.ct-rr { width: 46px; margin-left: 3px; margin-right: 3px; }
.ct-rr-a { width: 23px; background: #c17908; }
.ct-rr-a svg { width: 14px; height: 14px; }
.ct-rr-b { flex: 1; color: #555; font-size: 13px; }

.ct-grid { width: 49px; }
.ct-grid-a { width: 24px; background: #c17908; border-right: 1px solid #222; }
.ct-grid-a svg { width: 13px; height: 13px; }
.ct-grid-b { flex: 1; font-size: 13px; padding-bottom: 3px; }

.ct-fit, .ct-dim {
    justify-content: center;
    width: 22px;
}

.ct-fit svg, .ct-dim svg {
    width: 17px;
    height: 14px;
}

.ct-dim {
    background: #6e6e6e;
}

.ct-screen, .ct-fill {
    justify-content: center;
    font-size: 12px;
    font-weight: 500;
    white-space: nowrap;
}

.ct-screen { width: 79px; }
.ct-fill { width: 73px; }

/* Details */
.details {
    display: flex;
    flex-direction: column;
    width: 422px;
    height: 641px;
    margin-left: 2px;
}

.details .dock-tab {
    margin-left: 4px;
}

.details-body {
    overflow: hidden;
}

.name-line {
    display: flex;
    align-items: center;
    height: 18px;
    margin-top: 9px;
    padding-left: 10px;
}

.name-icon {
    width: 12px;
    height: 12px;
    margin-right: 5px;
}

.name-input {
    display: flex;
    align-items: center;
    width: 200px;
    height: 18px;
    padding-left: 5px;
    background: #d4d4d4;
    border-radius: 2px;
    color: #222;
}

.check {
    display: flex;
    align-items: center;
    justify-content: center;
    width: 14px;
    height: 14px;
    background: #aaa;
    border-radius: 2px;
    color: #333;
    font-size: 12px;
}

.name-line .check {
    margin-left: 8px;
}

.is-var {
    margin-left: 4px;
    width: 74px;
    font-size: 12.5px;
}

.open-image {
    color: #cfcfcf;
    border-bottom: 1px dotted #bbb;
    font-size: 12.8px;
}

.search-line {
    display: flex;
    align-items: center;
    height: 22px;
    margin-top: 10px;
    padding-left: 4px;
}

.search-details {
    width: 341px;
}

.matrix-btn {
    display: flex;
    align-items: center;
    justify-content: center;
    width: 26px;
    height: 22px;
    margin-left: 10px;
    background: linear-gradient(#ccc, #999);
    border-radius: 2px;
}

.matrix-btn svg {
    width: 14px;
    height: 14px;
}

.view-eye {
    width: 17px;
    height: 10px;
    margin-left: 4px;
}

.view-caret {
    margin-left: 3px;
    border-left: 4px solid transparent;
    border-right: 4px solid transparent;
    border-top: 4px solid #bbb;
}

.prop-list {
    margin: 1px 5px 0 2px;
    height: 700px;
    background: linear-gradient(#2a2a2a, #2a2a2a) 141px 0 / 1px 100% no-repeat;
    color: #b0b0b0;
}

.sect {
    display: flex;
    align-items: center;
    height: 29px;
    padding-left: 4px;
    background: linear-gradient(#2a2a2a, #2a2a2a) 141px 0 / 1px 100% no-repeat #333;
    border-radius: 2px;
    color: #d4d4d4;
    font-size: 12.6px;
    font-weight: 700;
    text-shadow: 1px 1px 0 #111;
}

.sect i {
    margin-right: 3px;
}

.sect-app {
    margin-top: 2px;
}

.row {
    position: relative;
    display: flex;
    align-items: center;
    height: 22px;
    padding-left: 16px;
}

.row-24 {
    height: 24px;
}

.row-gap {
    margin-top: 1px;
}

.row-anchors {
    height: 33px;
}

.row-image {
    height: 79px;
}

.row-tint {
    height: 22px;
}

.tri-row {
    position: absolute;
    left: 6px;
}

.tri-row-l1 {
    position: absolute;
    left: 14px;
}

.name {
    width: 109px;
    flex: none;
    white-space: nowrap;
    font-size: 12px;
}

.name-l1 {
    margin-left: 10px;
    width: 99px;
}

.name-l2 {
    margin-left: 20px;
    width: 89px;
}

.pin, .pin-gap {
    width: 11px;
    height: 11px;
    margin-right: 8px;
}

.num {
    display: flex;
    align-items: center;
    justify-content: space-between;
    width: 105px;
    height: 17px;
    padding: 0 6px 0 4px;
    background: #d6d6d6;
    border-radius: 3px;
    color: #222;
    font-size: 12px;
}

.num svg {
    width: 9px;
    height: 9px;
}

.num-wide {
    width: 116px;
    justify-content: flex-start;
}

.num-wide em {
    width: 14px;
}

.num-wide svg {
    margin-left: auto;
}

.num-next {
    margin-left: 3px;
}

.reset {
    width: 8px;
    height: 8px;
    margin-left: 8px;
}

.anchors-btn {
    display: flex;
    align-items: center;
    justify-content: space-between;
    width: 107px;
    height: 26px;
    margin-left: 1px;
    padding: 0 8px 0 7px;
    background: linear-gradient(#e2e2e2, #a6a6a6);
    border-radius: 2px;
    color: #1c1c1c;
    font-size: 12.5px;
}

.swatch {
    width: 18px;
    height: 19px;
    background: #3a0000;
}

.reset-brush {
    margin-left: 95px;
}

.bind-btn {
    display: flex;
    align-items: center;
    justify-content: center;
    width: 42px;
    height: 18px;
    margin-left: 92px;
    background: linear-gradient(#e0e0e0, #a8a8a8);
    border-radius: 2px;
    color: #222;
    font-size: 12.5px;
}

.thumb {
    position: relative;
    display: grid;
    grid-template-columns: repeat(4, 16px);
    grid-auto-rows: 16px;
    width: 65px;
    height: 66px;
    margin-left: 4px;
    box-shadow: 0 0 4px #000;
}

.thumb i:nth-child(8n+1), .thumb i:nth-child(8n+3),
.thumb i:nth-child(8n+6), .thumb i:nth-child(8n+8) {
    background: #800000;
}

.thumb i {
    background: #3a0000;
}

.thumb b {
    position: absolute;
    left: 0;
    bottom: 0;
    width: 64px;
    height: 3px;
    background: #2fb52f;
}

.asset-col {
    margin-left: 7px;
    align-self: flex-start;
    padding-top: 19px;
}

.asset-select {
    display: flex;
    align-items: center;
    justify-content: space-between;
    width: 158px;
    height: 19px;
    padding: 0 5px 0 2px;
    background: #5a5a5a;
    border-radius: 3px;
    color: #d8d8d8;
    text-shadow: 1px 1px 0 #222;
}

.asset-tools {
    display: flex;
    align-items: center;
    margin-top: 6px;
    padding-left: 6px;
}

.asset-tools svg {
    width: 12px;
    height: 12px;
    margin-right: 12px;
}

.asset-tools .reset {
    width: 8px;
    height: 8px;
    margin: 0 0 0 -2px;
}

.reset-asset {
    margin-left: 4px;
}

.tint-bar {
    width: 182px;
    height: 12px;
    background: #fff;
}

.check-tint {
    margin-left: 3px;
}

.inherit {
    margin-left: 3px;
}

.draw-as {
    width: 103px;
    height: 22px;
    margin-left: 1px;
    margin-top: 6px;
    background: linear-gradient(#eee, #bbb);
    border-radius: 2px;
}

.details-thumb {
    position: absolute;
    left: 404px;
    top: 62px;
    width: 11px;
    height: 180px;
    background: #fff;
    border: 1px solid #222;
    border-radius: 2px;
}

.mark-details {
    left: 7px;
    top: 305px;
    width: 394px;
    height: 124px;
}

/* Bottom dock */
.bottom {
    display: flex;
    height: 220px;
    padding-top: 4px;
}

.anim-col {
    display: flex;
    flex-direction: column;
    width: 288px;
}

.anim-body {
    display: flex;
    align-items: flex-start;
    padding: 6px 0 0 7px;
}

.add-anim {
    display: flex;
    align-items: center;
    justify-content: center;
    width: 79px;
    height: 21px;
    background: #4c9c44;
    border-radius: 2px;
    color: #fff;
    font-weight: 500;
    text-shadow: 1px 1px 0 #111;
}

.add-anim strong {
    margin-right: 2px;
    font-size: 16px;
}

.search-anim {
    width: 192px;
    margin: 2px 0 0 2px;
    padding-right: 0;
}

.time-col {
    display: flex;
    flex-direction: column;
    width: 1627px;
    margin-left: 5px;
}

.tab-row {
    display: flex;
    flex: none;
}

.tab-row .dock-tab:first-child {
    margin-left: 4px;
}

.time-body {
    position: relative;
    display: flex;
    flex-direction: column;
    flex: 1;
    background: #3e3e3e;
}

.time-tools {
    position: relative;
    display: flex;
    align-items: center;
    flex: none;
    height: 30px;
    padding-left: 14px;
}

.tt-wrench { width: 18px; height: 22px; }
.tt-play { width: 10px; height: 17px; margin-left: 23px; }
.tt-dots { width: 13px; height: 17px; margin-left: 17px; }
.tt-diamond { width: 20px; height: 24px; margin-left: 7px; }
.tt-diamond2 { width: 20px; height: 24px; margin-left: 18px; }
.tt-curve { width: 23px; height: 26px; margin-left: 7px; }

.tt-drop {
    width: 0;
    height: 0;
    border-left: 4px solid transparent;
    border-right: 4px solid transparent;
    border-top: 5px solid #666;
}

.tt-d1 { margin-left: 5px; }
.tt-d2 { margin-left: 8px; }
.tt-d3 { margin-left: 8px; }
.tt-d4 { margin-left: 4px; }
.tt-d5 { margin-left: 12px; }
.tt-d6 { margin-left: 2px; border-top-color: #777; }

.tt-sep {
    width: 1px;
    height: 26px;
    background: #2c2c2c;
}

.tt-s1 { margin-left: 13px; }
.tt-s2 { margin-left: 12px; }
.tt-s3 { margin-left: 10px; }
.tt-s4 { margin-left: 10px; }

.tt-magnet {
    display: flex;
    align-items: center;
    justify-content: center;
    width: 32px;
    height: 28px;
    margin-left: 5px;
    margin-top: 2px;
    background: #80645a;
    border-radius: 2px;
}

.tt-magnet svg {
    width: 20px;
    height: 22px;
}

.tt-fps {
    margin-left: 5px;
    color: #777;
    font-size: 12px;
    white-space: nowrap;
}

.tt-lock {
    position: absolute;
    right: 14px;
    top: 2px;
    width: 10px;
    height: 14px;
}

.time-main {
    display: flex;
    flex: 1;
    min-height: 0;
}

.track-side {
    flex: none;
    width: 492px;
}

.track-row {
    display: flex;
    align-items: center;
    height: 27px;
    padding-left: 8px;
}

.add-track {
    display: flex;
    align-items: center;
    justify-content: center;
    width: 65px;
    height: 20px;
    background: #6d8b6b;
    border: 1px solid #5a7a58;
    border-radius: 2px;
    color: #333;
    font-weight: 500;
}

.add-track strong {
    margin-right: 2px;
    font-size: 15px;
    color: #444;
}

.filters {
    display: flex;
    align-items: center;
    gap: 2px;
    width: 64px;
    margin-left: 6px;
    color: #8a8a8a;
}

.filters svg {
    width: 10px;
    height: 12px;
}

.search-track {
    width: 298px;
    background: #777;
    color: #585858;
}

.track-time {
    margin-left: 9px;
    color: #8a8a8a;
}

.time-side {
    display: flex;
    flex-direction: column;
    flex: 1;
    min-width: 0;
}

.time-ruler {
    position: relative;
    display: flex;
    flex: none;
    height: 27px;
    background: linear-gradient(90deg, #2d2d2d 1036px, #262626 1036px);
    color: #8a8a8a;
    font-size: 10px;
}

.time-ruler span {
    flex: none;
    width: 47.05px;
    height: 11px;
    margin-top: 16px;
    padding-left: 5px;
    border-left: 1px solid #777;
    line-height: 11px;
    letter-spacing: -0.2px;
}

.time-ruler .dim {
    color: #666;
    border-left-color: #666;
}

.time-ruler .no-tick {
    border-left: none;
}

.head-time {
    position: absolute;
    left: 104px;
    top: 2px;
    color: #aaa;
    font-size: 11.5px;
}

.playhead {
    position: absolute;
    left: 88px;
    top: 1px;
    width: 12px;
    height: 25px;
    background: #8a7a70;
    clip-path: polygon(10% 0, 90% 0, 100% 70%, 55% 100%, 45% 100%, 0 70%);
}

.end-mark {
    position: absolute;
    left: 1031px;
    top: 0;
    border-top: 5px solid #c01828;
    border-left: 5px solid transparent;
}

.time-tracks {
    flex: 1;
    background:
        linear-gradient(#2e8a2e, #2e8a2e) 94px 0 / 1px 100% no-repeat,
        repeating-linear-gradient(90deg, #333 0 1px, transparent 1px 47.05px),
        linear-gradient(90deg, #2d2d2d 94px, #3e3e3e 94px, #3e3e3e 1036px, #2d2d2d 1036px);
}

.no-anim {
    position: absolute;
    left: 0;
    right: 0;
    top: 55px;
    bottom: 0;
    display: flex;
    align-items: center;
    justify-content: center;
    color: #e6e6e6;
    font-size: 24.4px;
    text-shadow: 1px 1px 0 #000;
}

.watermark {
    position: absolute;
    left: 1631px;
    top: 943px;
    color: #8e8e8e;
    font-family: 'Roboto', 'Noto Sans CJK SC', sans-serif;
    white-space: nowrap;
}

.wm-big {
    font-size: 21.5px;
    line-height: 28px;
}

.wm-small {
    font-size: 14px;
    line-height: 18px;
}
```
